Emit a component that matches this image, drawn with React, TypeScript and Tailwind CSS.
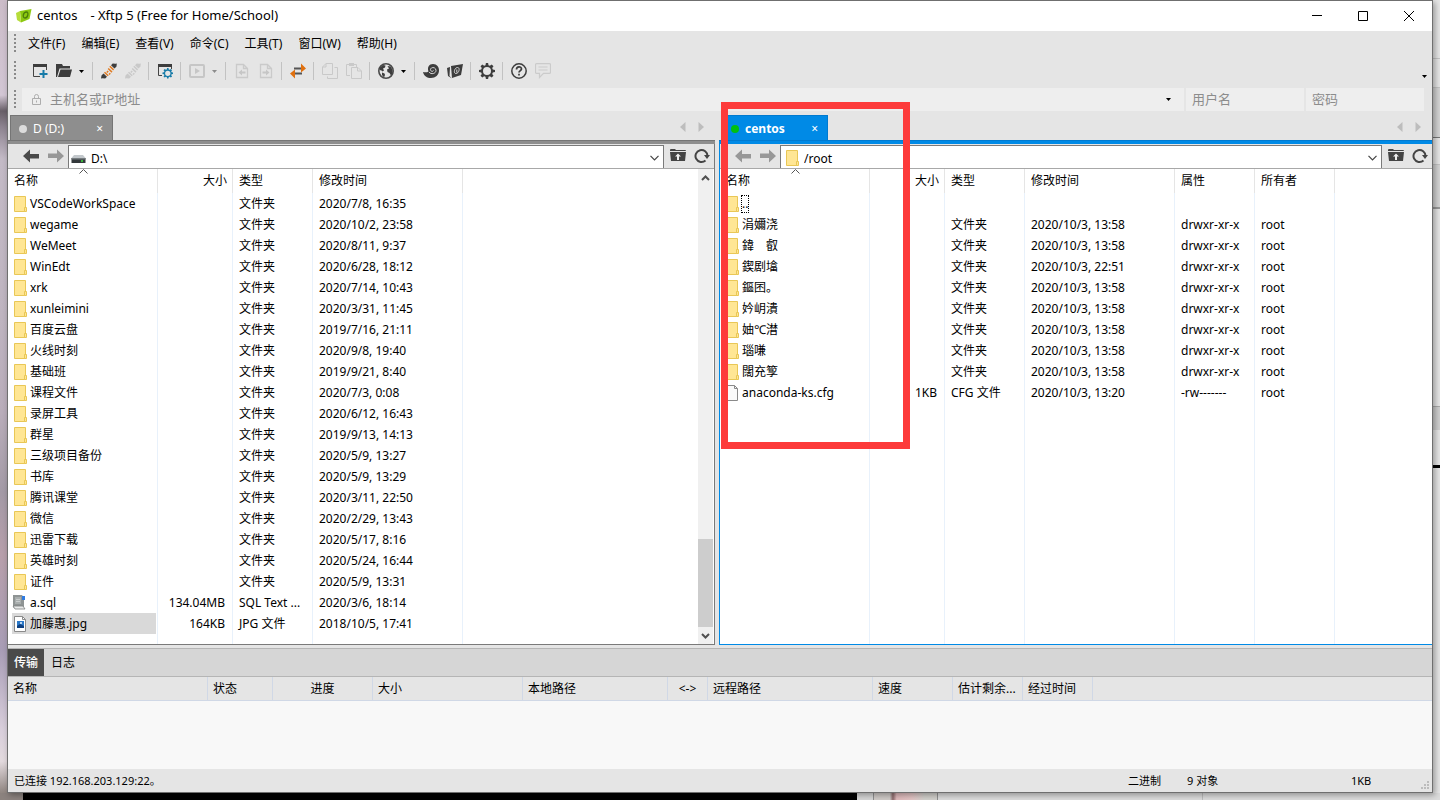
import React, { useState } from "react";

type Entry = {
  name: string;
  kind: "folder" | "sql" | "jpg" | "file";
  size?: string;
  type?: string;
  date?: string;
  attr?: string;
  owner?: string;
  selected?: boolean;
  focused?: boolean;
};

const folder = (name: string, date: string): Entry => ({ name, kind: "folder", type: "文件夹", date });

const remoteFolder = (name: string, date = "2020/10/3, 13:58"): Entry => ({
  name,
  kind: "folder",
  type: "文件夹",
  date,
  attr: "drwxr-xr-x",
  owner: "root",
});

const localEntries: Entry[] = [
  folder("VSCodeWorkSpace", "2020/7/8, 16:35"),
  folder("wegame", "2020/10/2, 23:58"),
  folder("WeMeet", "2020/8/11, 9:37"),
  folder("WinEdt", "2020/6/28, 18:12"),
  folder("xrk", "2020/7/14, 10:43"),
  folder("xunleimini", "2020/3/31, 11:45"),
  folder("百度云盘", "2019/7/16, 21:11"),
  folder("火线时刻", "2020/9/8, 19:40"),
  folder("基础班", "2019/9/21, 8:40"),
  folder("课程文件", "2020/7/3, 0:08"),
  folder("录屏工具", "2020/6/12, 16:43"),
  folder("群星", "2019/9/13, 14:13"),
  folder("三级项目备份", "2020/5/9, 13:27"),
  folder("书库", "2020/5/9, 13:29"),
  folder("腾讯课堂", "2020/3/11, 22:50"),
  folder("微信", "2020/2/29, 13:43"),
  folder("迅雷下载", "2020/5/17, 8:16"),
  folder("英雄时刻", "2020/5/24, 16:44"),
  folder("证件", "2020/5/9, 13:31"),
  { name: "a.sql", kind: "sql", size: "134.04MB", type: "SQL Text ...", date: "2020/3/6, 18:14" },
  { name: "加藤惠.jpg", kind: "jpg", size: "164KB", type: "JPG 文件", date: "2018/10/5, 17:41", selected: true },
];

const remoteEntries: Entry[] = [
  { name: "..", kind: "folder", focused: true },
  remoteFolder("涓嬭浇"),
  remoteFolder("鍏　叡"),
  remoteFolder("鍥剧墖", "2020/10/3, 22:51"),
  remoteFolder("鏂囨。"),
  remoteFolder("妗岄潰"),
  remoteFolder("妯℃澘"),
  remoteFolder("瑙嗛"),
  remoteFolder("闊充箰"),
  { name: "anaconda-ks.cfg", kind: "file", size: "1KB", type: "CFG 文件", date: "2020/10/3, 13:20", attr: "-rw-------", owner: "root" },
];

const menus = ["文件(F)", "编辑(E)", "查看(V)", "命令(C)", "工具(T)", "窗口(W)", "帮助(H)"];

const transferColumns = [
  { label: "名称", col: "w-[200px]", cell: "pl-[5px] text-left" },
  { label: "状态", col: "w-[65px]", cell: "pl-[5px] text-left" },
  { label: "进度", col: "w-[100px]", cell: "text-center" },
  { label: "大小", col: "w-[150px]", cell: "pl-[5px] text-left" },
  { label: "本地路径", col: "w-[145px]", cell: "pl-[5px] text-left" },
  { label: "<->", col: "w-[40px]", cell: "text-center" },
  { label: "远程路径", col: "w-[165px]", cell: "pl-[5px] text-left" },
  { label: "速度", col: "w-[80px]", cell: "pl-[5px] text-left" },
  { label: "估计剩余...", col: "w-[70px]", cell: "pl-[5px] text-left" },
  { label: "经过时间", col: "w-[70px]", cell: "pl-[5px] text-left" },
];

function Svg({ children, className = "" }: { children: React.ReactNode; className?: string }) {
  return (
    <svg width="16" height="16" viewBox="0 0 16 16" fill="none" aria-hidden="true" className={"shrink-0 " + className}>
      {children}
    </svg>
  );
}

function EntryIcon({ kind }: { kind: Entry["kind"] }) {
  if (kind === "folder") {
    return (
      <Svg>
        <path d="M2.500.500h11v15h-11z" fill="#ffe694" stroke="#e9c756" />
        <path d="M12.500 11.500h2v4h-2z" fill="#ffe694" stroke="#e9c756" />
      </Svg>
    );
  }
  if (kind === "sql") {
    return (
      <Svg>
        <path d="M1 0h9l2 3v9l-1 1H2l-1-1z" fill="#8f9494" />
        <path d="M3 2h6v7H3z" fill="#a9aeae" />
        <path d="M1 11h10l2 3H3z" fill="#e8eaea" stroke="#7d8282" strokeWidth=".8" />
        <path d="M4 4.500h4M4 6.500h4" stroke="#c8cccc" />
        <path d="M10 1h3v4h-3z" fill="#2f7be0" />
      </Svg>
    );
  }
  if (kind === "jpg") {
    return (
      <Svg>
        <path d="M2.500.500h8l3 3v12h-11z" fill="#fff" stroke="#8a8a8a" />
        <path d="M10.500.500v3h3" stroke="#8a8a8a" />
        <path d="M5 5h7v7H5z" fill="#2b78c8" />
        <path d="M5 10l3-2 4 2v2H5z" fill="#0d3f80" />
        <circle cx="9" cy="7" r="1" fill="#e8f4ff" />
      </Svg>
    );
  }
  return (
    <Svg>
      <path d="M1.500.500h9l3 3v12h-12z" fill="#fafafa" stroke="#8a8a8a" />
      <path d="M10.500.500v3h3" stroke="#8a8a8a" />
    </Svg>
  );
}

function Caret({ color = "#000" }: { color?: string }) {
  return (
    <svg width="5" height="3" viewBox="0 0 5 3" aria-hidden="true" className="shrink-0">
      <path d="M0 0h5L2.500 3z" fill={color} />
    </svg>
  );
}

function Chevron() {
  return (
    <svg width="9" height="6" viewBox="0 0 9 6" fill="none" aria-hidden="true">
      <path d="M.5.800l4 4 4-4" stroke="#444" strokeWidth="1.200" />
    </svg>
  );
}

function ToolButton({ label, children }: { label: string; children: React.ReactNode }) {
  return (
    <button type="button" aria-label={label} className="flex h-6 w-6 items-center justify-center">
      {children}
    </button>
  );
}

function DropButton({ label, color }: { label: string; color?: string }) {
  return (
    <button type="button" aria-label={label} className="flex h-6 w-[13px] items-center pl-[3px]">
      <Caret color={color} />
    </button>
  );
}

const Sep = () => <span className="mr-1 ml-[3px] h-[18px] w-px bg-[#c2c2c2]" />;

const Grip = () => (
  <span className="ml-[6px] h-5 w-[2px] shrink-0 bg-[repeating-linear-gradient(to_bottom,#8a8a8a_0_2px,transparent_2px_4px)]" />
);

// two plug halves meeting on the diagonal
function Plug({ line, cap }: { line: string; cap: string }) {
  return (
    <Svg>
      <path d="M0 15.500l.5-3 2-2 3.500 3.300-1.800 1.700-2.700-.3zM15.800.5l-.3 3-2 2L10 2.200 11.700.5l2.800.3z" fill={cap} />
      <path d="M3.500 9.300l3.700 3.500M5.800 9.500l1.400-1.500M8 11.500l1.300-1.300M8.800 3.300l3.800 3.600M7.200 5.500l3.800 3.600" stroke={line} strokeWidth="1.500" />
    </Svg>
  );
}

const gearPath =
  "M6.900 0h2.200l.4 2.200 1.400.6L12.700 1.500l1.800 1.800-1.300 1.800.6 1.400 2.200.4v2.200l-2.200.4-.6 1.400 1.300 1.800-1.800 1.800-1.800-1.300-1.400.6-.4 2.200H6.900l-.4-2.200-1.400-.6-1.800 1.300-1.800-1.800 1.300-1.800-.6-1.400L0 9.100V6.900l2.200-.4.6-1.400L1.500 3.300l1.800-1.800 1.800 1.300 1.400-.6zM8 4a4 4 0 100 8 4 4 0 000-8z";

function Toolbar() {
  return (
    <div className="flex h-7 items-center">
      <Grip />
      <div role="toolbar" className="ml-3 flex flex-1 items-center">
        <ToolButton label="新建">
          <Svg>
            <path d="M1.500 3v10.500H8M14.500 3v4" stroke="#444" />
            <path d="M1 1h14v3H1z" fill="#3d3d3d" />
            <path d="M11.500 7v8M7.500 11h8" stroke="#177ba8" strokeWidth="2" />
          </Svg>
        </ToolButton>
        <ToolButton label="打开">
          <Svg>
            <path d="M0 14V1h6l1 2h7v2.500H3.500L1 14z" fill="#3d3d3d" />
            <path d="M4.500 6.500H16l-2 7.500H2z" fill="#3d3d3d" />
          </Svg>
        </ToolButton>
        <DropButton label="打开列表" />
        <Sep />
        <ToolButton label="连接">
          <Plug line="#e07b22" cap="#3d3d3d" />
        </ToolButton>
        <ToolButton label="断开">
          <Plug line="#c9c9c9" cap="#c9c9c9" />
        </ToolButton>
        <Sep />
        <ToolButton label="属性">
          <Svg>
            <path d="M1.500 3v9.500H5M14.500 3v3" stroke="#444" />
            <path d="M1 1h14v3H1z" fill="#3d3d3d" />
            <path transform="translate(5.500 5) scale(.66)" d={gearPath} fill="#177ba8" fillRule="evenodd" />
          </Svg>
        </ToolButton>
        <Sep />
        <ToolButton label="同步">
          <Svg>
            <rect x="1" y="2" width="14" height="12" rx="1" stroke="#c6c6c6" strokeWidth="2" />
            <path d="M6 5l5 3-5 3z" fill="#c6c6c6" />
          </Svg>
        </ToolButton>
        <DropButton label="同步列表" color="#8c8c8c" />
        <Sep />
        <ToolButton label="下载">
          <Svg>
            <path d="M2.500 1.500h7l4 4v9h-11zM9.500 1.500v4h4" stroke="#cacaca" strokeWidth="1.300" />
            <path d="M4.500 9.500L8 6.500v2h3.500v2H8v2z" fill="#c6c6c6" />
          </Svg>
        </ToolButton>
        <ToolButton label="上传">
          <Svg>
            <path d="M2.500 1.500h7l4 4v9h-11zM9.500 1.500v4h4" stroke="#cacaca" strokeWidth="1.300" />
            <path d="M11.500 9.500L8 6.500v2H4.500v2H8v2z" fill="#c6c6c6" />
          </Svg>
        </ToolButton>
        <Sep />
        <ToolButton label="传输">
          <Svg>
            <path d="M4 5.500h8M4 10.500h8" stroke="#555" strokeWidth="2" />
            <path d="M11 .5l5 5-5 4zM5 6.500L0 10.500l5 5z" fill="#e0700f" />
          </Svg>
        </ToolButton>
        <Sep />
        <ToolButton label="复制">
          <Svg>
            <path d="M4 .5h6.500v11H.5V4zM4 .5V4H.5M12.500 4.500h3v11h-10v-2" stroke="#c9c9c9" />
          </Svg>
        </ToolButton>
        <ToolButton label="粘贴">
          <Svg>
            <path d="M4 12.500H.5v-11H3M8 1.500h2.500V4" stroke="#c9c9c9" />
            <path d="M3 0h5v3H3z" fill="#c9c9c9" />
            <path d="M5.500 4.500H12l3.500 3.500v7.500h-10zM11.500 4.500V8h4" stroke="#c9c9c9" />
          </Svg>
        </ToolButton>
        <Sep />
        <ToolButton label="浏览器">
          <Svg>
            <circle cx="8" cy="8" r="7.200" fill="#e5e5e5" stroke="#4a4a4a" strokeWidth="1.600" />
            <path d="M2 4.500l3-2.500 2.500.500-.500 2-2 1 1 2-1.500 1-1-1-2-.500zM4 9.500l2.500 1 .500 1.500L6 14.500 4 12zM9.500 3l3 .500 2 3V10l-1.500 2.500-1.500-2.500-2-1-.500-2.500 2-1z" fill="#3d3d3d" />
          </Svg>
        </ToolButton>
        <DropButton label="浏览器列表" />
        <Sep />
        <ToolButton label="Xshell">
          <Svg>
            <path d="M0 9c2 .500 4 .500 5.500-.500C4 4.500 6 1 10 1s6 3 6 6.500C16 12 12.500 15 8 15c-4 0-7-2-8-6z" fill="#3d3d3d" />
            <path d="M6 9c2 3 7 1.500 7-1.500 0-3.500-5-4-5.500-1-.200 2 2.500 2.500 3 1" stroke="#d8d8d8" />
          </Svg>
        </ToolButton>
        <ToolButton label="Xftp">
          <Svg>
            <path d="M4 3l12-2-2 11-9 3z" fill="#3d3d3d" />
            <path d="M0 5l3-1-.500 9L5 15.500 1 13z" fill="#3d3d3d" />
            <path d="M10.500 4.500c-3 0-4.500 6-1.500 6s4.500-6 1.500-6zM9.800 6.500v3" stroke="#d8d8d8" />
          </Svg>
        </ToolButton>
        <Sep />
        <ToolButton label="选项">
          <Svg>
            <path d={gearPath} fill="#3d3d3d" fillRule="evenodd" />
          </Svg>
        </ToolButton>
        <Sep />
        <ToolButton label="帮助">
          <Svg>
            <circle cx="8" cy="8" r="7.200" stroke="#3d3d3d" strokeWidth="1.500" />
            <path d="M5.500 6.500c0-3.500 5-3.500 5-.500 0 1.500-2.500 1.700-2.500 3.500M8 10.700v1.800" stroke="#3d3d3d" strokeWidth="1.700" />
          </Svg>
        </ToolButton>
        <ToolButton label="反馈">
          <Svg>
            <path d="M1.500.700h13q1 0 1 1v7.600q0 1-1 1H8.500L4.500 14.500v-4.200h-3q-1 0-1-1V1.700q0-1 1-1zM3.500 4h9M3.500 7h9" stroke="#cbcbcb" strokeWidth="1.200" />
          </Svg>
        </ToolButton>
      </div>
      <button type="button" aria-label="更多按钮" className="mr-[5px] self-end pb-[7px]">
        <Caret />
      </button>
    </div>
  );
}

function ConnectBar() {
  const field = "min-w-0 bg-[#eeeeee] text-[13px] leading-[23px] outline-none placeholder:text-[#8c8c8c]";
  return (
    <div className="flex h-[29px] items-center pr-2">
      <Grip />
      <div className="ml-[6px] flex h-[23px] flex-1 items-center bg-[#eeeeee] pl-[10px]">
        <svg width="9" height="11" viewBox="0 0 9 11" fill="none" aria-hidden="true">
          <path d="M.5 4.500h8v6h-8zM2.500 4.500v-2q0-2 2-2t2 2v2M4.500 6.500v2" stroke="#adadad" />
        </svg>
        <input aria-label="主机名或IP地址" placeholder="主机名或IP地址" className={field + " ml-[9px] flex-1"} />
        <button type="button" aria-label="主机列表" className="w-[18px]">
          <Caret />
        </button>
      </div>
      <input aria-label="用户名" placeholder="用户名" className={field + " ml-0.5 h-[23px] w-[118px] pl-[6px]"} />
      <input type="password" aria-label="密码" placeholder="密码" className={field + " ml-0.5 h-[23px] w-[118px] pl-[6px]"} />
    </div>
  );
}

function Pager() {
  return (
    <div className="ml-auto flex items-center gap-3 pr-[11px]">
      <button type="button" aria-label="上一个标签">
        <svg width="6" height="10" viewBox="0 0 6 10">
          <path d="M5.500 0v10L0 5z" fill="#bdbdbd" />
        </svg>
      </button>
      <button type="button" aria-label="下一个标签">
        <svg width="6" height="10" viewBox="0 0 6 10">
          <path d="M.5 0v10L6 5z" fill="#bdbdbd" />
        </svg>
      </button>
    </div>
  );
}

function Arrow({ color, flip }: { color: string; flip?: boolean }) {
  return (
    <Svg className={flip ? "rotate-180" : ""}>
      <path d="M0 8l7-6.500V6h9v4.500H7V14.500z" fill={color} />
    </Svg>
  );
}

function PathBar({ initial, drive, label }: { initial: string; drive?: boolean; label: string }) {
  const [path, setPath] = useState(initial);
  return (
    <div className="flex h-6 items-center bg-[#e5e5e5]">
      <div className="flex w-[60px] items-center gap-[9px] pl-[15px]">
        <button type="button" aria-label="后退">
          <Arrow color={drive ? "#4a4a4a" : "#979797"} />
        </button>
        <button type="button" aria-label="前进">
          <Arrow color="#979797" flip />
        </button>
      </div>
      <div className="mt-px flex h-[23px] min-w-0 flex-1 items-center border border-b-0 border-[#7a7a7a] bg-white pt-0.5 pr-1 pl-[3px]">
        {drive ? (
          <Svg className="-ml-px">
            <path d="M3 5h9l2.500 3H.500z" fill="#c3c8cc" />
            <path d="M.5 8h14v5H.5z" fill="#33383b" />
            <path d="M.5 8h14v1.500H.5z" fill="#777d80" />
            <circle cx="11" cy="11" r="1" fill="#3ee03e" />
          </Svg>
        ) : (
          <EntryIcon kind="folder" />
        )}
        <input
          aria-label={label}
          value={path}
          onChange={(e) => setPath(e.target.value)}
          className="ml-1 min-w-0 flex-1 pt-0.5 text-xs outline-none"
        />
        <button type="button" aria-label="路径列表">
          <Chevron />
        </button>
      </div>
      <div className="flex w-[50px] items-center gap-2 pl-[6px]">
        <button type="button" aria-label="上级目录">
          <Svg>
            <path d="M0 2q0-1 1-1h4l1 1h9q1 0 1 1H0zM0 4h16l-1 9H1z" fill="#444" />
            <path d="M8 5.500L11 8.500H9V12H7V8.500H5z" fill="#eee" />
          </Svg>
        </button>
        <button type="button" aria-label="刷新">
          <Svg>
            <path d="M11.500 12.500A6 6 0 1113.500 8" stroke="#444" strokeWidth="2" />
            <path d="M10 7h6l-3 4z" fill="#444" />
          </Svg>
        </button>
      </div>
    </div>
  );
}

function FileTable({ entries, remote }: { entries: Entry[]; remote?: boolean }) {
  const head = "relative border-r border-[#e5e5e5] p-0 pl-[6px] text-left font-normal";
  const cell = "overflow-hidden border-r border-[#e8f1fb] p-0 pl-[6px]";
  return (
    <table className="h-full w-full table-fixed border-separate border-spacing-0 whitespace-nowrap">
      <colgroup>
        <col className="w-[150px]" />
        <col className="w-[75px]" />
        <col className="w-[80px]" />
        <col className="w-[150px]" />
        {remote && <col className="w-[80px]" />}
        {remote && <col className="w-[80px]" />}
        <col />
      </colgroup>
      <thead>
        <tr className="h-6">
          <th className={head}>
            名称
            <svg width="9" height="5" viewBox="0 0 9 5" fill="none" aria-hidden="true" className="absolute top-0 left-[71px]">
              <path d="M.5 4.500l4-4 4 4" stroke="#555" />
            </svg>
          </th>
          <th className="border-r border-[#e5e5e5] p-0 pr-[5px] text-right font-normal">大小</th>
          <th className={head}>类型</th>
          <th className={head}>修改时间</th>
          {remote && <th className={head}>属性</th>}
          {remote && <th className={head}>所有者</th>}
          <td />
        </tr>
      </thead>
      <tbody>
        {entries.map((e) => (
          <tr key={e.name} className="h-[21px]">
            <td className="border-r border-[#e8f1fb] p-0 pr-px pl-1">
              <div className={"flex h-[21px] items-center gap-0.5 " + (e.selected ? "bg-[#d9d9d9]" : "")}>
                <EntryIcon kind={e.kind} />
                <span className={e.focused ? "h-4 outline-1 outline-dotted outline-black" : ""}>{e.name}</span>
              </div>
            </td>
            <td className="border-r border-[#e8f1fb] p-0 pr-[7px] text-right">{e.size}</td>
            <td className={cell}>{e.type}</td>
            <td className={cell}>{e.date}</td>
            {remote && <td className={cell}>{e.attr}</td>}
            {remote && <td className={cell}>{e.owner}</td>}
            <td />
          </tr>
        ))}
        <tr aria-hidden="true">
          <td className={cell} />
          <td className={cell} />
          <td className={cell} />
          <td className={cell} />
          {remote && <td className={cell} />}
          {remote && <td className={cell} />}
          <td />
        </tr>
      </tbody>
    </table>
  );
}

function LocalPane() {
  return (
    <section className="flex min-w-0 flex-col">
      <div className="flex h-[26px] items-end pl-0.5">
        <div className="flex h-[25px] w-[103px] items-center border border-b-0 border-[#757575] bg-[#8e8e8e] pt-0.5 pr-[9px] pl-2 text-white">
          <span className="h-2 w-2 rounded-full bg-[#dcdcdc]" />
          <button type="button" className="ml-[6px]">D (D:)</button>
          <button type="button" aria-label="关闭 D" className="ml-auto">×</button>
        </div>
        <div className="flex h-[26px] flex-1">
          <Pager />
        </div>
      </div>
      <div className="h-1 border-t border-[#757575] bg-[#8e8e8e]" />
      <div className="flex min-h-0 flex-1 flex-col border-r border-b border-[#7a7a7a] bg-white">
        <PathBar initial={"D:\\"} drive label="本地路径" />
        <div className="flex min-h-0 flex-1 border-t border-[#a8a8a8] pr-px">
          <div className="min-w-0 flex-1">
            <FileTable entries={localEntries} />
          </div>
          <div className="flex w-[15px] flex-col items-center bg-[#f0f0f0]">
            <svg width="9" height="6" viewBox="0 0 9 6" fill="none" aria-hidden="true" className="mt-[6px]">
              <path d="M1 5l3.500-3.500L8 5" stroke="#505050" strokeWidth="2" />
            </svg>
            <span className="mt-auto h-[88px] w-full bg-[#cdcdcd]" />
            <svg width="9" height="6" viewBox="0 0 9 6" fill="none" aria-hidden="true" className="mt-[6px] mb-[5px]">
              <path d="M1 1l3.500 3.500L8 1" stroke="#505050" strokeWidth="2" />
            </svg>
          </div>
        </div>
      </div>
    </section>
  );
}

function RemotePane() {
  return (
    <section className="relative flex min-w-0 flex-col">
      <div className="flex h-[26px] items-end pl-[3px]">
        <div className="flex h-[25px] w-[106px] items-center border border-b-0 border-[#007ad0] bg-[#008ae6] pt-0.5 pr-[9px] pl-2 text-white">
          <span className="h-2 w-2 rounded-full bg-[#00c010]" />
          <button type="button" className="ml-[6px] font-bold">centos</button>
          <button type="button" aria-label="关闭 centos" className="ml-auto">×</button>
        </div>
        <div className="flex h-[26px] flex-1">
          <Pager />
        </div>
      </div>
      <div className="h-1 border-t border-[#007ad0] bg-[#008ae6]" />
      <div className="flex min-h-0 flex-1 flex-col border-b border-l border-[#008ae6] bg-white">
        <PathBar initial="/root" label="远程路径" />
        <div className="min-h-0 flex-1 border-t border-[#a8a8a8]">
          <FileTable entries={remoteEntries} remote />
        </div>
      </div>
      {/* highlight frame around the remote name column */}
      <div className="pointer-events-none absolute -top-3 left-0.5 z-10 h-[347px] w-[189px] border-[7px] border-[#fd3a3a]" />
    </section>
  );
}

function TransferPanel() {
  return (
    <section>
      <div className="flex h-[29px] border-y border-[#b5b5b5] bg-[#d6d6d6]">
        <button type="button" className="w-9 bg-[#4a4a4a] font-medium text-white">传输</button>
        <button type="button" className="px-[7px]">日志</button>
      </div>
      <div className="h-[92px] bg-[#f8f8f8]">
        <table className="w-full table-fixed border-separate border-spacing-0 bg-[#e5e5e5] whitespace-nowrap [font-variant-ligatures:none]">
          <colgroup>
            {transferColumns.map((c) => (
              <col key={c.label} className={c.col} />
            ))}
            <col />
          </colgroup>
          <thead>
            <tr className="h-6">
              {transferColumns.map((c) => (
                <th key={c.label} className={"border-r border-b border-[#d0d8e6] p-0 font-normal " + c.cell}>
                  {c.label}
                </th>
              ))}
              <td className="border-b border-[#d0d8e6]" />
            </tr>
          </thead>
        </table>
      </div>
    </section>
  );
}

function TitleBar() {
  return (
    <header className="flex h-[30px] items-center bg-white pl-2">
      <Svg>
        <path d="M4 3l11.500-2-2 10L5 14.500z" fill="#8cc811" />
        <path d="M0 5l4-2 1 11.500L1 12z" fill="#b6dc3a" />
        <path d="M10.500 4c-3.500 0-4.500 6-1.500 6s4-6 1.500-6z" stroke="#4c7d08" strokeWidth="1.300" />
      </Svg>
      <h1 className="ml-[5px] flex gap-[13px] text-[13px]">
        <span>centos</span>
        <span>- Xftp 5 (Free for Home/School)</span>
      </h1>
      <div className="ml-auto flex">
        <button type="button" aria-label="最小化" className="flex h-[30px] w-[46px] items-center justify-center">
          <svg width="10" height="10" viewBox="0 0 10 10"><path d="M0 4.500h10" stroke="#000" /></svg>
        </button>
        <button type="button" aria-label="最大化" className="flex h-[30px] w-[46px] items-center justify-center">
          <svg width="10" height="10" viewBox="0 0 10 10" fill="none"><path d="M.5.500h9v9h-9z" stroke="#000" /></svg>
        </button>
        <button type="button" aria-label="关闭" className="flex h-[30px] w-[46px] items-center justify-center">
          <svg width="10" height="10" viewBox="0 0 10 10"><path d="M0 0l10 10M10 0L0 10" stroke="#000" /></svg>
        </button>
      </div>
    </header>
  );
}

function StatusBar() {
  return (
    <footer className="flex h-[23px] items-center pt-0.5 pl-[6px] text-[11px]">
      <span>已连接 192.168.203.129:22。</span>
      <span className="ml-auto w-[59px]">二进制</span>
      <span className="w-[164px]">9 对象</span>
      <span className="w-[70px]">1KB</span>
      <svg width="9" height="9" viewBox="0 0 9 9" aria-hidden="true" className="mr-[2px] mb-[2px] self-end">
        <path d="M6 0h2v2H6zM3 3h2v2H3zM6 3h2v2H6zM0 6h2v2H0zM3 6h2v2H3zM6 6h2v2H6z" fill="#bcbcbc" />
      </svg>
    </footer>
  );
}

export default function App() {
  return (
    <div className="flex h-screen min-w-[1200px] flex-col bg-[#dcdcdc] font-['Noto_Sans','Noto_Sans_CJK_SC',sans-serif] text-xs text-black">
      <div className="flex min-h-0 flex-1">
        <div className="w-[7px] bg-[linear-gradient(to_bottom,#cbbcc8_0%,#d2c6d4_12%,#685f68_14%,#8d8390_16%,#c3bac6_20%,#beb4c0_40%,#b9adba_52%,#a39aa6_62%,#b79fab_70%,#a89db6_82%,#d8cedb_92%,#e3dade_96%,#8f8580_100%)]" />
        <main className="z-10 flex min-w-0 flex-1 flex-col border border-[#6f6f6f] bg-[#e5e5e5] shadow-[2px_2px_6px_rgba(0,0,0,0.35)]">
          <TitleBar />
          <nav className="flex h-[26px] items-center">
            <Grip />
            <div className="ml-3 flex gap-4">
              {menus.map((m) => (
                <button key={m} type="button">{m}</button>
              ))}
            </div>
          </nav>
          <Toolbar />
          <ConnectBar />
          <div className="grid min-h-0 flex-1 grid-cols-[707fr_713fr] gap-1">
            <LocalPane />
            <RemotePane />
          </div>
          <div className="h-[3px]" />
          <TransferPanel />
          <StatusBar />
        </main>
        <div className="flex w-[7px] flex-col bg-[#e6e6e6]">
          <div className="h-[59px] border-b border-[#c4c4c4]" />
          <div className="h-[29px] border-b border-[#c4c4c4]" />
          <div className="h-[50px] border-b border-[#777] bg-[#d4d4d4]" />
          <div className="h-[27px] border-b border-[#c4c4c4]" />
          <div className="h-[44px] border-b-2 border-[#999] bg-[#d4d4d4]" />
          <div className="h-[198px] border-b border-[#aaa]" />
          <div className="h-[23px] bg-[#cfcfcf]" />
          <div className="h-[38px] border-b-3 border-black" />
        </div>
      </div>
      <div className="flex h-[7px]">
        <div className="w-[23px] bg-[#8b827e]" />
        <div className="w-[834px] bg-black" />
        <div className="w-4 bg-[#d6d6d6]" />
        <div className="w-[65px] border-x border-[#909090] bg-[linear-gradient(to_right,#cfcac7_25%,#8d6a6c_30%,#dfb9bb_36%,#e2c4c4_60%,#d2d0cc_80%)]" />
        <div className="w-[265px] border-r border-[#bdbdbd]" />
      </div>
    </div>
  );
}
